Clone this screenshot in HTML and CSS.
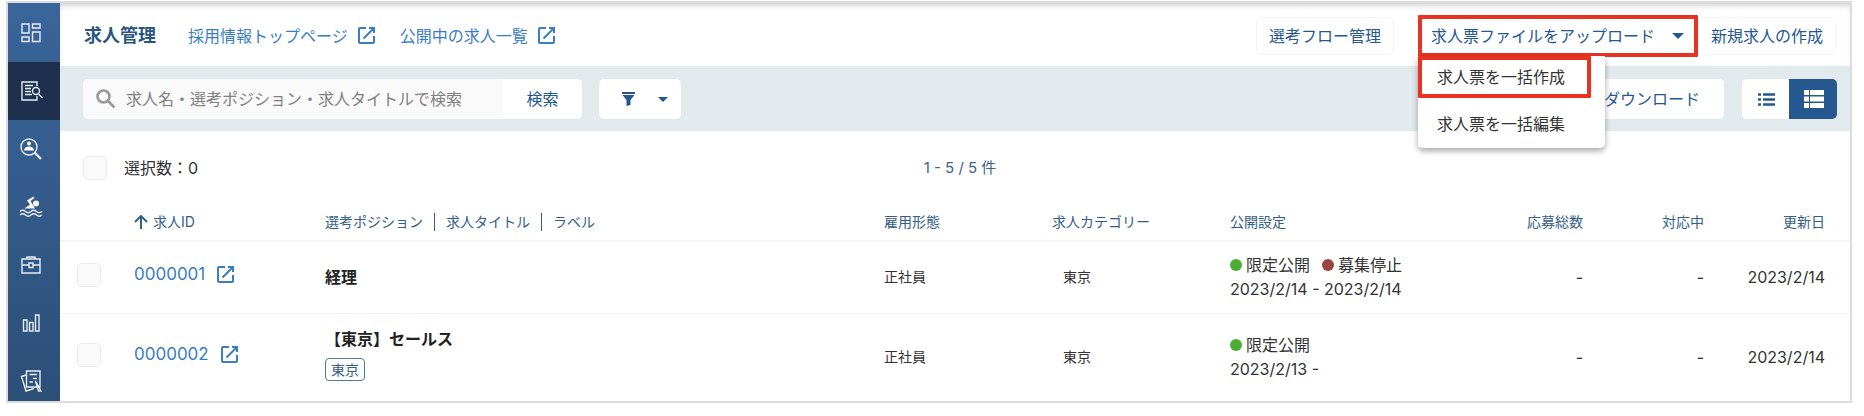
FILE: index.html
```html
<!DOCTYPE html>
<html lang="ja">
<head>
<meta charset="utf-8">
<title>求人管理</title>
<link rel="stylesheet" href="styles.css">
</head>
<body>
<svg class="defs" aria-hidden="true">
  <symbol id="external" viewBox="0 0 17 17">
    <path d="M8 1H2Q1 1 1 2V15Q1 16 2 16H15Q16 16 16 15V9M11 1H16V6M16 1L5.500 11.500" fill="none" stroke="currentColor" stroke-width="2"/>
  </symbol>
  <symbol id="caret" viewBox="0 0 12 6"><path d="M0 0H12L6 6Z" fill="currentColor"/></symbol>
</svg>
<div class="app">
  <nav class="sidebar" aria-label="メインメニュー">
    <a class="nav-item" href="#" aria-label="ダッシュボード">
      <svg class="nav-icon" viewBox="0 0 22 22"><path d="M2 2H9V11H2ZM12.500 2H20V6H12.500ZM2 15H9V19.500H2ZM12.500 10H20V19.500H12.500Z"/></svg>
    </a>
    <a class="nav-item nav-item-active" href="#" aria-label="求人管理" aria-current="page">
      <svg class="nav-icon" viewBox="0 0 22 22"><path d="M17 6V2H2V20H17V16M5 5.500H13M5 8.500H11M5 11.500H11M5 14.500H12M18.500 14L22.500 18"/><circle cx="16" cy="11" r="3.500"/></svg>
    </a>
    <a class="nav-item" href="#" aria-label="候補者検索">
      <svg class="nav-icon" viewBox="0 0 22 22"><circle cx="9" cy="9" r="8"/><circle class="solid" cx="9" cy="5.500" r="2"/><path class="solid" d="M4 12.500Q4.500 8.500 9 8.500T14 12.500Z"/><path class="thick" d="M14.500 14.500L21 21"/></svg>
    </a>
    <a class="nav-item" href="#" aria-label="タレントプール">
      <svg class="nav-icon" viewBox="0 0 22 22"><circle class="solid" cx="16" cy="7.500" r="3"/><path class="solid" d="M7 4.500L13.500 0.500L14.500 2L10.500 5L15 12.500H4.500L10 8.500Z"/><path d="M0 15.500Q2.800 13 5.500 15.500T11 15.500T16.500 15.500T22 15.500M0 19Q2.800 16.500 5.500 19T11 19T16.500 19T22 19"/></svg>
    </a>
    <a class="nav-item" href="#" aria-label="選考">
      <svg class="nav-icon" viewBox="0 0 22 22"><path d="M2 5H20V19H2ZM7 5V3H15V5M2 11H9M13 11H20M9 9H13V13.500H9Z"/></svg>
    </a>
    <a class="nav-item" href="#" aria-label="レポート">
      <svg class="nav-icon" viewBox="0 0 22 22"><path d="M3.500 8H7V19H3.500ZM9.500 10.500H13V19H9.500ZM15.500 3H19V19H15.500Z"/></svg>
    </a>
    <a class="nav-item" href="#" aria-label="評価">
      <svg class="nav-icon" viewBox="0 0 22 22"><path d="M6.500 1H20V17H6.500ZM6 5L1.500 6.500L6 21L14 18.500M9.500 4.500H17M13 8.500H17M9.500 12H13M15.500 11L21 21L18.500 21Z"/></svg>
    </a>
  </nav>
  <main class="main">
    <header class="header">
      <h1 class="title">求人管理</h1>
      <a class="link" href="#">採用情報トップページ<svg class="ext"><use href="#external"/></svg></a>
      <a class="link" href="#">公開中の求人一覧<svg class="ext"><use href="#external"/></svg></a>
      <div class="actions">
        <button class="btn btn-flow" type="button">選考フロー管理</button>
        <div class="dropdown">
          <button class="btn btn-upload" type="button" aria-expanded="true">求人票ファイルをアップロード<svg class="caret"><use href="#caret"/></svg></button>
          <div class="menu">
            <button class="menu-item menu-item-marked" type="button">求人票を一括作成</button>
            <button class="menu-item" type="button">求人票を一括編集</button>
          </div>
        </div>
        <button class="btn" type="button">新規求人の作成</button>
      </div>
    </header>
    <div class="toolbar">
      <form class="search">
        <label class="search-box">
          <svg class="search-icon" viewBox="0 0 20 20"><circle cx="7.500" cy="7.500" r="6"/><path d="M12 12L18.500 18.500"/></svg>
          <input class="search-input" type="text" aria-label="求人を検索" placeholder="求人名・選考ポジション・求人タイトルで検索">
        </label>
        <button class="search-btn" type="button">検索</button>
      </form>
      <button class="filter" type="button" aria-label="絞り込み">
        <svg class="funnel" viewBox="0 0 13 14"><path d="M0 0H13V2H0ZM0.500 3H12.500L8.500 8V13L4.500 14V8Z" fill="currentColor"/></svg>
        <svg class="caret caret-small"><use href="#caret"/></svg>
      </button>
      <button class="download" type="button">ダウンロード</button>
      <div class="views">
        <button class="view" type="button" aria-label="リスト表示"><svg class="list-icon" viewBox="0 0 17 13"><path d="M0 1.500H3M5 1.500H17M0 6.500H3M5 6.500H17M0 11.500H3M5 11.500H17"/></svg></button>
        <button class="view view-active" type="button" aria-label="詳細表示"><svg class="grid-icon" viewBox="0 0 20 18"><path d="M0 0H5V5H0ZM6 0H20V5H6ZM0 6.500H5V11.500H0ZM6 6.500H20V11.500H6ZM0 13H5V18H0ZM6 13H20V18H6Z" fill="currentColor"/></svg></button>
      </div>
    </div>
    <div class="summary">
      <label class="select-all"><input class="check" type="checkbox">選択数：0</label>
      <p class="pager">1 - 5 / 5 件</p>
    </div>
    <table class="jobs">
      <colgroup><col class="c-check"><col class="c-id"><col><col class="c-type"><col class="c-cat"><col class="c-pub"><col class="c-total"><col class="c-open"><col class="c-date"></colgroup>
      <thead>
        <tr>
          <th></th>
          <th><span class="sort"><svg class="arrow" viewBox="0 0 14 14"><path d="M7 14V1M1 7L7 1L13 7"/></svg>求人ID</span></th>
          <th><span class="parts"><span>選考ポジション</span><span>求人タイトル</span><span>ラベル</span></span></th>
          <th>雇用形態</th>
          <th>求人カテゴリー</th>
          <th>公開設定</th>
          <th class="num">応募総数</th>
          <th class="num">対応中</th>
          <th class="num last">更新日</th>
        </tr>
      </thead>
      <tbody>
        <tr class="row">
          <td class="cell-check"><input class="check" type="checkbox" aria-label="0000001を選択"></td>
          <td class="cell-id"><a class="job-id" href="#">0000001<svg class="ext"><use href="#external"/></svg></a></td>
          <td><strong class="name">経理</strong></td>
          <td class="small">正社員</td>
          <td class="small cat">東京</td>
          <td><div class="status"><span class="dot"></span>限定公開<span class="dot dot-stop"></span>募集停止</div><div class="term">2023/2/14 - 2023/2/14</div></td>
          <td class="num">-</td>
          <td class="num">-</td>
          <td class="num last">2023/2/14</td>
        </tr>
        <tr class="row row-tall">
          <td class="cell-check"><input class="check" type="checkbox" aria-label="0000002を選択"></td>
          <td class="cell-id"><a class="job-id" href="#">0000002<svg class="ext"><use href="#external"/></svg></a></td>
          <td class="cell-tagged"><strong class="name">【東京】セールス</strong><span class="tag">東京</span></td>
          <td class="small">正社員</td>
          <td class="small cat">東京</td>
          <td><div class="status"><span class="dot"></span>限定公開</div><div class="term">2023/2/13 -</div></td>
          <td class="num">-</td>
          <td class="num">-</td>
          <td class="num last">2023/2/14</td>
        </tr>
      </tbody>
    </table>
  </main>
</div>
</body>
</html>
```
FILE: styles.css
```css
* { box-sizing: border-box; }
body {
  margin: 1px 12px 12px 6px;
  background: #fff;
  color: #333;
  font: 16px/24px Inter, "Noto Sans CJK JP", sans-serif;
}
button, input { font: inherit; margin: 0; }
button { border: 0; padding: 0; background: #fff; color: #24588f; cursor: pointer; }
a { text-decoration: none; }
svg { display: block; flex: none; }
.defs { display: none; }

.app { display: flex; border: 2px solid #dcdcdc; }

.sidebar {
  contain: size;
  width: 52px;
  flex: none;
  overflow: hidden;
  padding-top: 1px;
  background: linear-gradient(#3a659b, #2c4f78);
}
.nav-item {
  display: flex;
  height: 58px;
  align-items: center;
  justify-content: center;
  padding-right: 6px;
  color: #e6edf5;
}
.nav-item-active { background: #1d304d; }
.nav-icon { width: 22px; height: 22px; overflow: visible; fill: none; stroke: currentColor; stroke-width: 1.4; }
.nav-icon .solid { fill: #fff; stroke: none; }
.nav-icon .thick { stroke-width: 2.4; }

.main { flex: 1; min-width: 0; }
.header {
  display: flex;
  align-items: center;
  height: 63px;
  padding: 2px 14px 0 24px;
  box-shadow: inset 0 5px 6px -3px #c8c8c8;
}
.title { margin: 0 32px 0 0; font-size: 18px; font-weight: 700; color: #2b5580; }
.link { display: flex; align-items: center; gap: 10px; margin-right: 25px; color: #3b7dc4; }
.ext { width: 17px; height: 17px; }
.actions { display: flex; align-items: center; margin-left: auto; }
.btn { height: 38px; padding: 0 12px; border: 1px solid #f1f5f9; border-radius: 5px; }
.btn-flow { margin-right: 24px; }
.dropdown { position: relative; }
.btn-upload {
  display: flex;
  align-items: center;
  gap: 17px;
  height: 42px;
  padding: 0 10px 0 9px;
  border: 4px solid #e83323;
  border-radius: 1px;
}
.caret { width: 12px; height: 6px; }
.caret-small { width: 10px; height: 5px; }
.menu {
  position: absolute;
  z-index: 2;
  top: 41px;
  left: 0;
  width: 187px;
  padding-bottom: 1px;
  border-radius: 0 0 5px 5px;
  background: #fff;
  box-shadow: 0 3px 6px rgba(0, 0, 0, .35);
}
.menu-item {
  display: block;
  width: 173px;
  height: 46px;
  margin-top: 3px;
  padding-left: 19px;
  color: #333;
  text-align: left;
}
.menu-item-marked { height: 42px; margin-top: 0; padding-left: 15px; border: 4px solid #e83323; border-radius: 1px; }

.toolbar {
  display: flex;
  height: 65px;
  padding: 13px 13px 12px 23px;
  background: #e3eaee;
}
.search { display: flex; width: 499px; }
.search-box {
  display: flex;
  flex: 1;
  align-items: center;
  gap: 10px;
  padding-left: 13px;
  border-radius: 5px 0 0 5px;
  background: #fafafa;
}
.search-icon { width: 20px; height: 20px; fill: none; stroke: #999; stroke-width: 2.6; }
.search-input { flex: 1; min-width: 0; padding: 0; border: 0; outline: 0; background: none; color: #333; }
.search-input::placeholder { color: #808080; opacity: 1; }
.search-btn { width: 79px; border-radius: 0 5px 5px 0; }
.filter {
  display: flex;
  align-items: center;
  gap: 23px;
  margin-left: 17px;
  padding: 0 13px 0 23px;
  border-radius: 5px;
}
.funnel { width: 13px; height: 14px; }
.download { margin-left: auto; padding: 0 24px; border-radius: 5px; }
.views { display: flex; margin-left: 18px; border-radius: 5px; overflow: hidden; }
.view { display: flex; width: 47px; align-items: center; justify-content: center; padding-left: 2px; }
.view-active { background: #24588f; color: #fff; width: 48px; }
.list-icon { width: 17px; height: 13px; stroke: currentColor; stroke-width: 2.6; }
.grid-icon { width: 20px; height: 18px; }

.summary {
  display: grid;
  grid-template-columns: 1fr auto 1fr;
  align-items: center;
  height: 73px;
  padding: 0 13px 0 23px;
}
.select-all { display: flex; align-items: center; gap: 17px; }
.check {
  display: block;
  width: 24px;
  height: 24px;
  margin: 0;
  border: 1px solid #ebebeb;
  border-radius: 5px;
  background: #fafafa;
  appearance: none;
}
.pager { margin: 0; font-size: 15px; color: #3d6488; }

.jobs { width: 100%; table-layout: fixed; border-collapse: collapse; }
.c-check { width: 66px; }
.c-id { width: 191px; }
.c-type { width: 168px; }
.c-cat { width: 178px; }
.c-pub { width: 240px; }
.c-total { width: 129px; }
.c-open { width: 121px; }
.c-date { width: 138px; }
th, td { padding: 0 8px; text-align: left; white-space: nowrap; }
th { height: 37px; border-bottom: 2px solid #f4f4f4; font-size: 14px; font-weight: 400; color: #336087; }
.num { text-align: right; }
.last { padding-right: 25px; }
.sort { display: flex; align-items: center; gap: 5px; }
.arrow { width: 14px; height: 14px; fill: none; stroke: currentColor; stroke-width: 2; }
.parts { display: flex; align-items: center; }
.parts span + span { margin-left: 11px; padding-left: 11px; border-left: 1px solid #336087; line-height: 18px; }
.row { height: 72px; border-bottom: 1px solid #f1f1f1; }
.row-tall { height: 88px; border-bottom: 0; }
.cell-check { padding: 0 0 5px 17px; }
.cell-id { padding-bottom: 6px; }
.cell-tagged { padding-bottom: 6px; }
.job-id { display: flex; align-items: center; gap: 12px; font-size: 17px; color: #3b7dc4; }
.name { display: block; font-weight: 700; color: #222; }
.tag {
  display: inline-block;
  margin-top: 7px;
  padding: 0 5px;
  border: 1px solid #4f7ba0;
  border-radius: 4px;
  font-size: 14px;
  line-height: 21px;
  color: #336087;
}
.small { font-size: 14px; }
.cat { padding-left: 19px; }
.status { display: flex; align-items: center; gap: 4px; }
.dot { width: 12px; height: 12px; border-radius: 50%; background: #4bab34; }
.dot-stop { margin-left: 8px; background: #9b4340; }
```
